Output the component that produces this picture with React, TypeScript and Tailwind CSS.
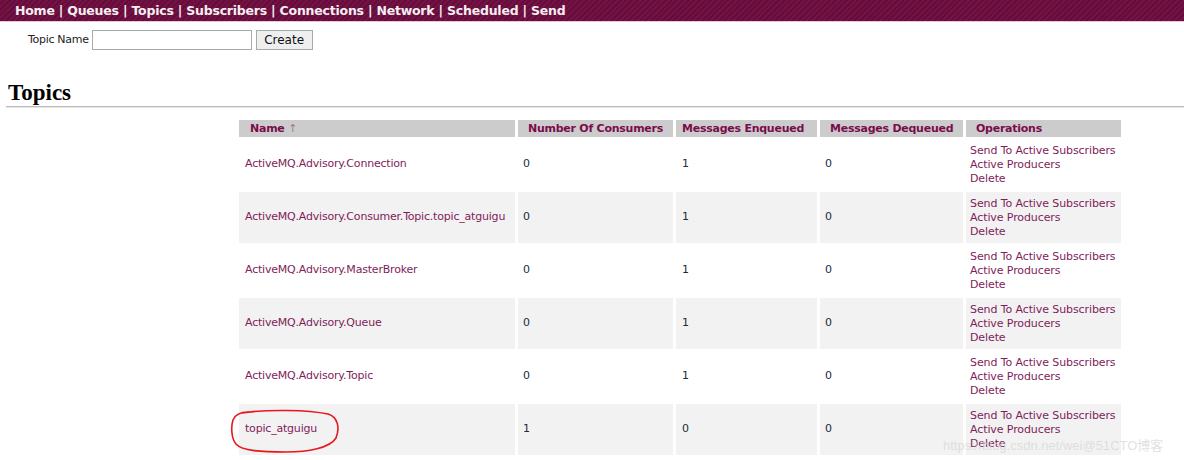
import React from "react";

const rows = [
  { name: "ActiveMQ.Advisory.Connection", c: "0", e: "1", d: "0" },
  { name: "ActiveMQ.Advisory.Consumer.Topic.topic_atguigu", c: "0", e: "1", d: "0" },
  { name: "ActiveMQ.Advisory.MasterBroker", c: "0", e: "1", d: "0" },
  { name: "ActiveMQ.Advisory.Queue", c: "0", e: "1", d: "0" },
  { name: "ActiveMQ.Advisory.Topic", c: "0", e: "1", d: "0" },
  { name: "topic_atguigu", c: "1", e: "0", d: "0" },
];

const navItems = ["Home", "Queues", "Topics", "Subscribers", "Connections", "Network", "Scheduled", "Send"];

export default function App() {
  return (
    <div className="relative w-[1184px] h-[460px] overflow-hidden bg-white font-['DejaVu_Sans',sans-serif] text-[11px] text-[#222]">
      <div className="h-[22px] border-b border-[#e8c9d6] bg-[repeating-linear-gradient(135deg,#721443_0px,#721443_2px,#660b3b_2px,#660b3b_4px)] pl-[15px] pt-[1px] flex items-center">
        <div className="text-[12.5px] font-bold text-[#f4eef1] tracking-[-0.22px] whitespace-nowrap">
          {navItems.map((n, i) => (
            <span key={n}>
              {i > 0 && <span> | </span>}
              {n}
            </span>
          ))}
        </div>
      </div>
      <div className="flex items-center h-[20px] mt-[8px] pl-[28px] gap-[3px]">
        <span className="text-[11px] text-[#222] tracking-[-0.3px]">Topic Name</span>
        <div className="w-[160px] h-[20px] border border-[#a9a9a9] bg-white" />
        <div className="ml-[1px] w-[57px] h-[20px] border border-[#a9a9a9] bg-[#efefef] flex items-center justify-center text-[12px] text-[#111]">
          Create
        </div>
      </div>
      <div className="mt-[29px] pl-[8px] font-['Liberation_Serif',serif] font-bold text-[23px] leading-[27px] text-black">Topics</div>
      <div className="ml-[6px] mt-[0px] h-[2px] border-t border-[#bbbbbb] border-b border-b-[#e6e6e6]" />
      <table className="ml-[236px] mt-[10px] border-separate border-spacing-x-[3px] border-spacing-y-[2px] table-fixed w-[888px]">
        <thead>
          <tr className="bg-[#cccccc] text-[#7a0c4c] font-bold text-[11px] tracking-[-0.25px]">
            <th className="w-[276px] h-[17px] p-0 pl-[11px] text-left leading-[17px]">
              Name <span className="font-normal text-[#a27890]">↑</span>
            </th>
            <th className="w-[155px] h-[17px] p-0 pl-[10px] text-left leading-[17px]">Number Of Consumers</th>
            <th className="w-[141px] h-[17px] p-0 pl-[6px] text-left leading-[17px]">Messages Enqueued</th>
            <th className="w-[143px] h-[17px] p-0 pl-[10px] text-left leading-[17px]">Messages Dequeued</th>
            <th className="w-[155px] h-[17px] p-0 pl-[10px] text-left leading-[17px]">Operations</th>
          </tr>
        </thead>
        <tbody>
          {rows.map((r, i) => (
            <tr key={r.name} className={i % 2 === 1 ? "bg-[#f2f2f2]" : "bg-white"}>
              <td className="h-[51px] p-0 pl-[6px] align-middle text-[#7f1d5a] whitespace-nowrap tracking-[-0.2px]">{r.name}</td>
              <td className="p-0 pl-[5px] align-middle text-[#1c2a3a]">{r.c}</td>
              <td className="p-0 pl-[6px] align-middle text-[#1c2a3a]">{r.e}</td>
              <td className="p-0 pl-[5px] align-middle text-[#1c2a3a]">{r.d}</td>
              <td className="p-0 pl-[4px] align-middle text-[#7f1d5a] leading-[14px] whitespace-nowrap tracking-[-0.1px]">
                <div>Send To Active Subscribers</div>
                <div>Active Producers</div>
                <div>Delete</div>
              </td>
            </tr>
          ))}
        </tbody>
      </table>
      <svg className="absolute left-[228px] top-[406px]" width="116" height="52" viewBox="0 0 116 52" fill="none">
        <path
          d="M14 7 C40 3, 80 4, 100 8 C110 11, 112 22, 108 32 C102 42, 80 46, 58 46 C34 46, 14 45, 8 38 C3 32, 3 20, 5 14 C7 9, 12 6, 20 6"
          stroke="#e8171b"
          strokeWidth="1.6"
          strokeLinecap="round"
        />
      </svg>
      <div className="absolute left-[943px] top-[436px] text-[13px] text-[#d4d4d4]/70 font-['Liberation_Sans',sans-serif] whitespace-nowrap pointer-events-none">
        https://blog.csdn.net/wei<span className="font-['Liberation_Sans','Noto_Sans_CJK_SC',sans-serif]">@51CTO博客</span>
      </div>
    </div>
  );
}
